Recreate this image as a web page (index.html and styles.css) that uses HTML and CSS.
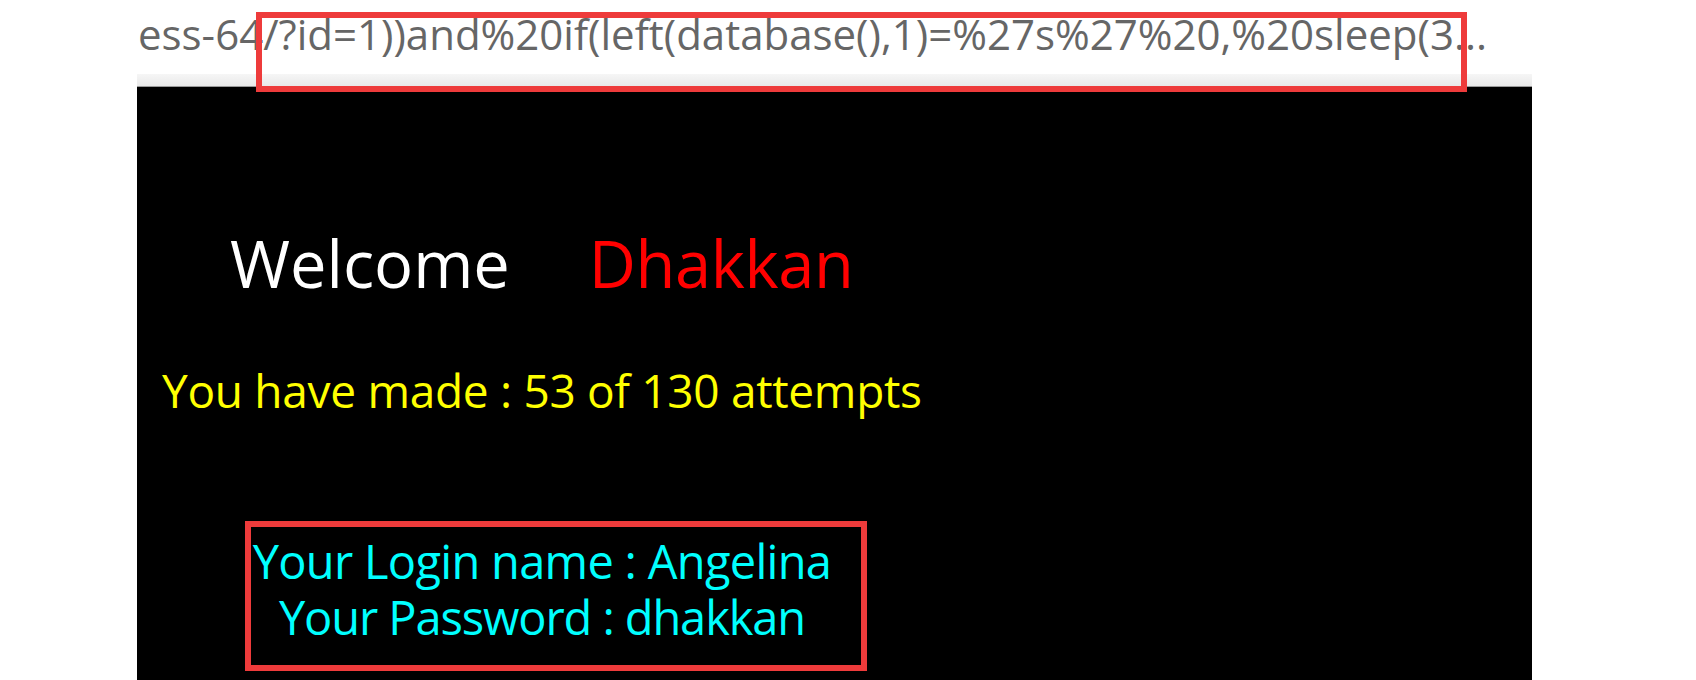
FILE: index.html
```html
<!DOCTYPE html>
<html>
<head>
<meta charset="utf-8">
<link rel="stylesheet" href="styles.css">
</head>
<body>
<div class="url-line">
  <span class="url-text">ess-64/?id=1))and%20if(left(database(),1)=%27s%27%20,%20sleep(3...</span>
  <div class="mark mark-url"></div>
</div>
<div class="frame">
  <div class="toolbar"></div>
  <div class="page">
    <div class="welcome"><span class="w-white">Welcome</span><span class="w-red">Dhakkan</span></div>
    <div class="attempts">You have made : 53 of 130 attempts</div>
    <div class="creds">
      <div class="cred-line">Your Login name : Angelina</div>
      <div class="cred-line">Your Password : dhakkan</div>
    </div>
  </div>
</div>
</body>
</html>
```

FILE: styles.css
```css
html, body {
  margin: 0;
  padding: 0;
  background: #ffffff;
  height: 680px;
  overflow: hidden;
}

body {
  font-family: "Open Sans", "Noto Sans", sans-serif;
}

.url-line {
  position: relative;
  height: 74px;
  box-sizing: border-box;
  padding-top: 13px;
  padding-left: 138px;
}

.url-text {
  display: block;
  font-size: 42px;
  line-height: 42px;
  color: #666666;
  white-space: nowrap;
}

.mark {
  position: absolute;
  border: 6px solid #ee3b3b;
  box-sizing: border-box;
}

.mark-url {
  left: 256px;
  top: 12px;
  width: 1211px;
  height: 80px;
}

.frame {
  margin-left: 137px;
  width: 1395px;
}

.toolbar {
  height: 12px;
  background: linear-gradient(#f6f6f6, #e9e9e9);
  border-bottom: 1px solid #9a9a9a;
}

.page {
  background: #000000;
  height: 593px;
  padding-top: 144px;
  box-sizing: border-box;
}

.welcome {
  display: flex;
  gap: 79px;
  padding-left: 93px;
  font-size: 65px;
  line-height: 65px;
}

.w-white { color: #ffffff; }
.w-red { color: #ff0000; letter-spacing: -0.4px; }

.attempts {
  margin-top: 71px;
  padding-left: 25px;
  font-size: 46px;
  line-height: 46px;
  letter-spacing: -0.3px;
  color: #ffff00;
}

.creds {
  margin-top: 108px;
  margin-left: 108px;
  width: 622px;
  height: 150px;
  box-sizing: border-box;
  border: 6px solid #ee3b3b;
  padding: 6px 28px 0 0;
  text-align: center;
}

.cred-line {
  font-size: 47px;
  line-height: 56px;
  letter-spacing: -0.7px;
  color: #00ffff;
  white-space: nowrap;
}

.cred-line + .cred-line {
  letter-spacing: -1.1px;
}
```
